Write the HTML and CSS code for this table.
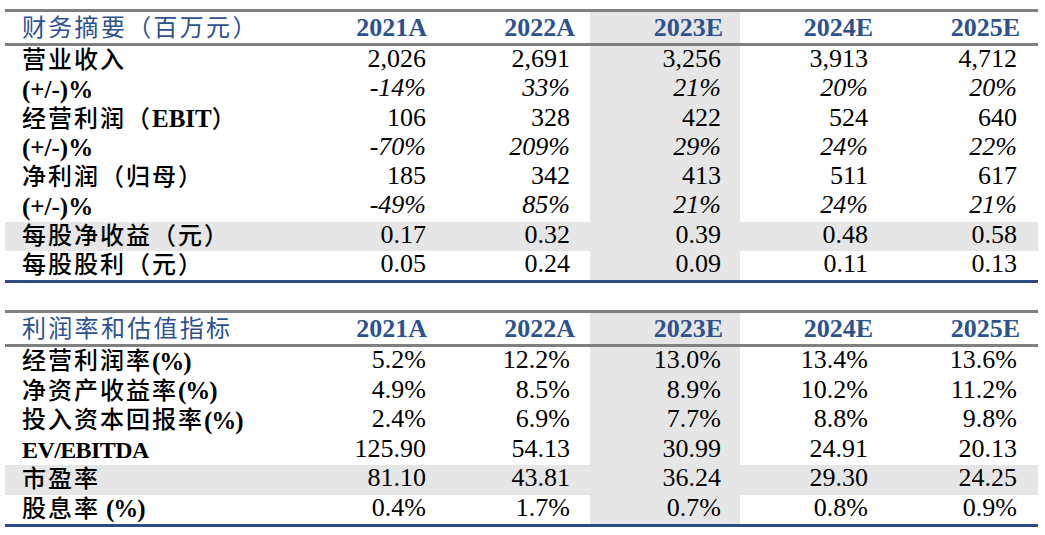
FILE: index.html
```html
<!DOCTYPE html>
<html lang="zh-CN">
<head>
<meta charset="utf-8">
<title>财务摘要</title>
<link rel="stylesheet" href="styles.css">
</head>
<body>
<div class="page">
  <div class="tbl">
    <div class="row head">
      <div class="cell label title">财务摘要（百万元）</div>
      <div class="cell">2021A</div>
      <div class="cell">2022A</div>
      <div class="cell">2023E</div>
      <div class="cell">2024E</div>
      <div class="cell">2025E</div>
    </div>
    <div class="row">
      <div class="cell label">营业收入</div>
      <div class="cell">2,026</div><div class="cell">2,691</div><div class="cell">3,256</div><div class="cell">3,913</div><div class="cell">4,712</div>
    </div>
    <div class="row it">
      <div class="cell label"><span class="lat">(+/-)%</span></div>
      <div class="cell">-14%</div><div class="cell">33%</div><div class="cell">21%</div><div class="cell">20%</div><div class="cell">20%</div>
    </div>
    <div class="row">
      <div class="cell label">经营利润（<span class="lat">EBIT</span>）</div>
      <div class="cell">106</div><div class="cell">328</div><div class="cell">422</div><div class="cell">524</div><div class="cell">640</div>
    </div>
    <div class="row it">
      <div class="cell label"><span class="lat">(+/-)%</span></div>
      <div class="cell">-70%</div><div class="cell">209%</div><div class="cell">29%</div><div class="cell">24%</div><div class="cell">22%</div>
    </div>
    <div class="row">
      <div class="cell label">净利润（归母）</div>
      <div class="cell">185</div><div class="cell">342</div><div class="cell">413</div><div class="cell">511</div><div class="cell">617</div>
    </div>
    <div class="row it">
      <div class="cell label"><span class="lat">(+/-)%</span></div>
      <div class="cell">-49%</div><div class="cell">85%</div><div class="cell">21%</div><div class="cell">24%</div><div class="cell">21%</div>
    </div>
    <div class="row shade">
      <div class="cell label">每股净收益（元）</div>
      <div class="cell">0.17</div><div class="cell">0.32</div><div class="cell">0.39</div><div class="cell">0.48</div><div class="cell">0.58</div>
    </div>
    <div class="row">
      <div class="cell label">每股股利（元）</div>
      <div class="cell">0.05</div><div class="cell">0.24</div><div class="cell">0.09</div><div class="cell">0.11</div><div class="cell">0.13</div>
    </div>
  </div>

  <div class="tbl second">
    <div class="row head">
      <div class="cell label title">利润率和估值指标</div>
      <div class="cell">2021A</div>
      <div class="cell">2022A</div>
      <div class="cell">2023E</div>
      <div class="cell">2024E</div>
      <div class="cell">2025E</div>
    </div>
    <div class="row">
      <div class="cell label">经营利润率<span class="lat pct">(%)</span></div>
      <div class="cell">5.2%</div><div class="cell">12.2%</div><div class="cell">13.0%</div><div class="cell">13.4%</div><div class="cell">13.6%</div>
    </div>
    <div class="row">
      <div class="cell label">净资产收益率<span class="lat pct">(%)</span></div>
      <div class="cell">4.9%</div><div class="cell">8.5%</div><div class="cell">8.9%</div><div class="cell">10.2%</div><div class="cell">11.2%</div>
    </div>
    <div class="row">
      <div class="cell label">投入资本回报率<span class="lat pct">(%)</span></div>
      <div class="cell">2.4%</div><div class="cell">6.9%</div><div class="cell">7.7%</div><div class="cell">8.8%</div><div class="cell">9.8%</div>
    </div>
    <div class="row">
      <div class="cell label"><span class="lat ev">EV/EBITDA</span></div>
      <div class="cell">125.90</div><div class="cell">54.13</div><div class="cell">30.99</div><div class="cell">24.91</div><div class="cell">20.13</div>
    </div>
    <div class="row shade">
      <div class="cell label">市盈率</div>
      <div class="cell">81.10</div><div class="cell">43.81</div><div class="cell">36.24</div><div class="cell">29.30</div><div class="cell">24.25</div>
    </div>
    <div class="row">
      <div class="cell label">股息率<span class="lat pct gap">(%)</span></div>
      <div class="cell">0.4%</div><div class="cell">1.7%</div><div class="cell">0.7%</div><div class="cell">0.8%</div><div class="cell">0.9%</div>
    </div>
  </div>
</div>
</body>
</html>
```

FILE: styles.css
```css
html, body {
  margin: 0;
  padding: 0;
  background: #ffffff;
}

.page {
  padding: 9px 0 0 5px;
  width: 1033px;
}

.tbl {
  border-top: 3px solid #808080;
  border-bottom: 3px solid #2d4d82;
}

.tbl.second {
  margin-top: 27px;
}

.row {
  display: grid;
  grid-template-columns: 287px 150px 148px 150px 149px 149px;
  height: 29.25px;
  font-family: "Liberation Serif", "Times New Roman", serif;
  font-size: 26px;
  color: #000000;
}

.second .row {
  height: 29.5px;
}

.row.head {
  height: 31px;
  border-bottom: 3px solid #808080;
  font-weight: bold;
  color: #2e5190;
}

.second .row.head {
  height: 31px;
}

.cell {
  display: flex;
  align-items: center;
  justify-content: flex-end;
  line-height: 1;
  white-space: nowrap;
  padding-bottom: 3px;
  box-sizing: border-box;
}

.row.head .cell {
  padding-bottom: 0;
}

.cell:nth-child(4) {
  background: #e6e6e6;
}

.row.shade {
  background: #e6e6e6;
}

.cell:nth-child(2) { padding-right: 16px; }
.cell:nth-child(3) { padding-right: 20px; }
.cell:nth-child(4) { padding-right: 19px; }
.cell:nth-child(5) { padding-right: 21px; }
.cell:nth-child(6) { padding-right: 21px; }

.row.head .cell:nth-child(2) { padding-right: 15px; }
.row.head .cell:nth-child(3) { padding-right: 15px; }
.row.head .cell:nth-child(4) { padding-right: 17px; }
.row.head .cell:nth-child(5) { padding-right: 16px; }
.row.head .cell:nth-child(6) { padding-right: 18px; }

.cell.label {
  justify-content: flex-start;
  padding-left: 17px;
  padding-bottom: 1px;
  font-family: "Liberation Serif", "Noto Sans CJK SC", serif;
  font-size: 24px;
  letter-spacing: 2px;
  font-weight: 500;
  color: #000000;
}

.row.head .cell.label {
  padding-bottom: 0;
}

.cell.label.title {
  font-weight: normal;
  color: #2e5190;
  letter-spacing: 2.3px;
}

.lat {
  font-family: "Liberation Serif", "Times New Roman", serif;
  font-weight: bold;
  font-size: 25px;
  letter-spacing: 0;
}

.lat.pct {
  letter-spacing: -1px;
}

.lat.ev {
  font-size: 24px;
  letter-spacing: -0.6px;
}

.lat.gap {
  margin-left: 6px;
}

.row.it .cell {
  font-style: italic;
}

.row.it .cell.label {
  font-style: normal;
}
```
